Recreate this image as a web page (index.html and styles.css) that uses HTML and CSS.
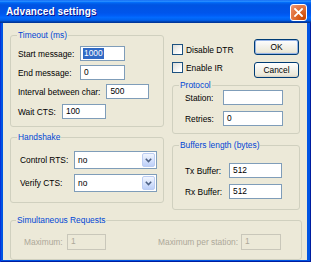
FILE: index.html
```html
<!DOCTYPE html>
<html lang="en">
<head>
  <meta charset="UTF-8">
  <title>Advanced settings</title>
  <link rel="stylesheet" href="styles.css">
</head>
<body>

  <div class="window">
    <div class="titlebar">
      <span class="title">Advanced settings</span>
      <span class="close">
        <svg width="9" height="9" viewBox="0 0 9 9"><path d="M1 1L8 8M8 1L1 8" stroke="#fff" stroke-width="1.8" stroke-linecap="square"/></svg>
      </span>
    </div>

    <div class="client">
      <div class="top">
        <div class="col-left">
          <fieldset class="group timeout">
            <legend>Timeout (ms)</legend>
            <div class="row">
              <span class="label w62">Start message:</span>
              <span class="field w45"><span class="sel">1000</span></span>
            </div>
            <div class="row">
              <span class="label w62">End message:</span>
              <span class="field w45">0</span>
            </div>
            <div class="row">
              <span class="label gap6">Interval between char:</span>
              <span class="field w43">500</span>
            </div>
            <div class="row wait">
              <span class="label w44">Wait CTS:</span>
              <span class="field w44">100</span>
            </div>
          </fieldset>

          <fieldset class="group handshake">
            <legend>Handshake</legend>
            <div class="row tall">
              <span class="label w54">Control RTS:</span>
              <span class="combo">
                <span class="combo-text">no</span>
                <span class="combo-btn"><svg width="7" height="5" viewBox="0 0 7 5"><path d="M0.8 0.8L3.5 3.5L6.2 0.8" fill="none" stroke="#4d6185" stroke-width="1.6"/></svg></span>
              </span>
            </div>
            <div class="row tall">
              <span class="label w54">Verify CTS:</span>
              <span class="combo">
                <span class="combo-text">no</span>
                <span class="combo-btn"><svg width="7" height="5" viewBox="0 0 7 5"><path d="M0.8 0.8L3.5 3.5L6.2 0.8" fill="none" stroke="#4d6185" stroke-width="1.6"/></svg></span>
              </span>
            </div>
          </fieldset>
        </div>

        <div class="col-right">
          <div class="options">
            <div class="checks">
              <label class="check"><span class="box"></span>Disable DTR</label>
              <label class="check"><span class="box"></span>Enable IR</label>
            </div>
            <div class="buttons">
              <span class="btn default">OK</span>
              <span class="btn">Cancel</span>
            </div>
          </div>

          <fieldset class="group protocol">
            <legend>Protocol</legend>
            <div class="row">
              <span class="label w38">Station:</span>
              <span class="field w60"></span>
            </div>
            <div class="row">
              <span class="label w38">Retries:</span>
              <span class="field w60">0</span>
            </div>
          </fieldset>

          <fieldset class="group buffers">
            <legend>Buffers length (bytes)</legend>
            <div class="row">
              <span class="label w44">Tx Buffer:</span>
              <span class="field w53">512</span>
            </div>
            <div class="row">
              <span class="label w44">Rx Buffer:</span>
              <span class="field w53">512</span>
            </div>
          </fieldset>
        </div>
      </div>

      <fieldset class="group requests">
        <legend>Simultaneous Requests</legend>
        <div class="row disabled">
          <span class="label w43">Maximum:</span>
          <span class="field w39">1</span>
          <span class="label w83 station">Maximum per station:</span>
          <span class="field w40">1</span>
        </div>
      </fieldset>
    </div>
  </div>

</body>
</html>
```

FILE: styles.css
```css
body {
  margin: 0;
  font-family: 'Liberation Sans', Arial, sans-serif;
  font-size: 8.4px;
  color: #000;
}

.window {
  width: 311px;
  height: 262px;
  display: flex;
  flex-direction: column;
  background: #0054e3;
  box-shadow: inset 1px 0 #0831d9, inset -1px 0 #001ea0, inset 0 -1px #001ea0;
}

/* title bar */
.titlebar {
  height: 23px;
  flex: none;
  display: flex;
  align-items: center;
  justify-content: space-between;
  padding: 0 4px 0 6px;
  background: linear-gradient(to bottom, #0058ee 0%, #3593ff 4%, #288eff 6%, #127dff 8%, #036ffc 10%, #0262ee 14%, #0057e5 20%, #0054e3 24%, #0055eb 56%, #005bf5 66%, #026afe 76%, #0062ef 86%, #0052d6 92%, #0040ab 94%, #003092 100%);
}

.title {
  color: #fff;
  font-weight: bold;
  font-size: 10px;
  letter-spacing: 0.1px;
  text-shadow: 1px 1px #0f1089;
}

.close {
  width: 15px;
  height: 15px;
  margin-top: 1px;
  display: flex;
  align-items: center;
  justify-content: center;
  border: 1px solid #fff;
  border-radius: 3px;
  background: radial-gradient(circle at 85% 90%, #cc4600 0%, #dc6527 40%, #e8845a 80%, #f0a488 100%);
}

/* dialog body */
.client {
  flex: 1;
  margin: 0 4px 4px 3px;
  padding: 7px 5px 0 7px;
  background: #ece9d8;
}

.top {
  display: flex;
  gap: 8px;
}

.col-left {
  width: 154px;
  display: flex;
  flex-direction: column;
}

.col-right {
  width: 128px;
}

/* group boxes */
.group {
  margin: 0;
  padding: 0 6px 0 7px;
  border: 1px solid #d0d0bf;
  border-radius: 3px;
  min-width: 0;
}

.group legend {
  line-height: 10px;
  padding: 0 1px;
  margin-left: -1px;
  color: #0046d5;
}

.row {
  display: flex;
  align-items: center;
  height: 15px;
}

.label {
  flex: none;
  white-space: nowrap;
}

.field {
  box-sizing: border-box;
  flex: none;
  height: 15px;
  padding-left: 3px;
  border: 1px solid #7f9db9;
  background: #fff;
  line-height: 13px;
}

.sel {
  display: inline-block;
  background: #316ac5;
  color: #fff;
  line-height: 11px;
  padding: 0 1px;
  margin-left: -1px;
}

.w38 { width: 38px; }
.w39 { width: 39px; }
.w40 { width: 40px; }
.w43 { width: 43px; }
.w44 { width: 44px; }
.w45 { width: 45px; }
.w53 { width: 53px; }
.w54 { width: 54px; }
.w60 { width: 60px; }
.w62 { width: 62px; }
.w83 { width: 83px; }
.gap6 { margin-right: 6px; }

.timeout {
  padding-top: 6px;
  padding-bottom: 7px;
}

.timeout .row + .row {
  margin-top: 4px;
}

.timeout .row.wait {
  margin-top: 5px;
}

.handshake {
  margin-top: 5px;
  padding-top: 9px;
  padding-bottom: 10px;
}

.handshake .row {
  height: 18px;
  margin-left: 2px;
}

.handshake .row + .row {
  margin-top: 5px;
}

/* combo box */
.combo {
  box-sizing: border-box;
  width: 83px;
  height: 18px;
  display: flex;
  border: 1px solid #7f9db9;
  background: #fff;
}

.combo-text {
  flex: 1;
  padding-left: 3px;
  line-height: 16px;
}

.combo-btn {
  box-sizing: border-box;
  width: 13px;
  margin: 1px;
  display: flex;
  align-items: center;
  justify-content: center;
  border: 1px solid #bccdf2;
  border-radius: 2px;
  background: linear-gradient(to bottom, #f2f6fe, #d2dffb 60%, #bccff8);
}

/* checkboxes and buttons */
.options {
  display: flex;
  justify-content: space-between;
  margin-top: 9px;
  padding-right: 1px;
}

.checks {
  display: flex;
  flex-direction: column;
  gap: 7px;
  padding-top: 5px;
}

.check {
  display: flex;
  align-items: center;
  height: 11px;
}

.box {
  box-sizing: border-box;
  width: 11px;
  height: 11px;
  margin-right: 3px;
  border: 1px solid #1c5180;
  background: linear-gradient(135deg, #dcdcd7, #fff 80%);
}

.buttons {
  display: flex;
  flex-direction: column;
  gap: 7px;
  width: 45px;
}

.btn {
  box-sizing: border-box;
  height: 16px;
  display: flex;
  align-items: center;
  justify-content: center;
  border: 1px solid #003c74;
  border-radius: 3px;
  background: linear-gradient(to bottom, #fff, #f4f3ee 40%, #ece9d8 85%, #d6d0c5);
}

.btn.default {
  box-shadow: inset 0 0 0 1px #97b5e8;
}

.protocol {
  margin-top: 2px;
  padding-bottom: 7px;
}

.protocol .row,
.buffers .row {
  margin-left: 5px;
}

.protocol .row + .row,
.buffers .row + .row {
  margin-top: 6px;
}

.buffers {
  margin-top: 6px;
  padding-top: 13px;
  padding-bottom: 10px;
}

/* disabled group */
.requests {
  margin-top: 5px;
  padding-left: 6px;
  padding-top: 9px;
  padding-bottom: 9px;
}

.requests .row {
  height: 16px;
  margin-left: 7px;
}

.disabled .label {
  color: #aca899;
}

.disabled .field {
  height: 16px;
  border-color: #c9c7ba;
  background: #ece9d8;
  color: #aca899;
}

.station {
  margin-left: 52px;
}
```
